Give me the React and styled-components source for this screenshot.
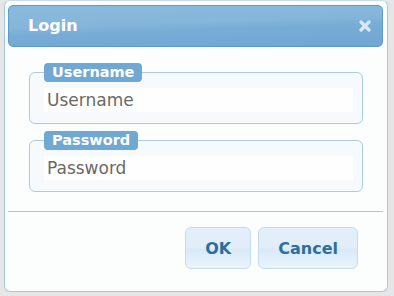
import React from "react";
import styled, { createGlobalStyle } from "styled-components";

const Global = createGlobalStyle`
  html, body { margin: 0; padding: 0; background: #e6e6e6; }
  body { font-family: "DejaVu Sans", Verdana, sans-serif; }
  * { box-sizing: border-box; }
`;

const Dialog = styled.div`
  margin-left: 4px;
  width: 384px;
  height: 292px;
  background: #fcfdfd;
  border: 1px solid #a6c9e2;
  border-top-color: #c9dced;
  border-radius: 6px;
  padding: 4px 4px 0 3px;
  display: flex;
  flex-direction: column;
`;

const TitleBar = styled.div`
  height: 42px;
  border: 1px solid #5a9bd6;
  border-radius: 5px;
  background: linear-gradient(
    178deg,
    #8bb9dc 0%,
    #87b6db 40%,
    #78acd5 58%,
    #6fa6d2 100%
  );
  display: flex;
  align-items: center;
  justify-content: space-between;
  padding: 0 11px 0 19px;
`;

const Title = styled.span`
  color: #ffffff;
  font-weight: bold;
  font-size: 16px;
  line-height: 20px;
`;

const Close = styled.svg`
  width: 12px;
  height: 12px;
  display: block;
`;

const Body = styled.div`
  padding: 16px 20px 0 21px;
  display: flex;
  flex-direction: column;
  gap: 7px;
`;

const Field = styled.fieldset`
  margin: 0;
  border: 1px solid #a9cbe3;
  border-radius: 6px;
  padding: 6px 9px 11px 14px;
  background: #f7fafc;
  min-width: 0;
`;

const Legend = styled.legend`
  background: #70a8d4;
  color: #ffffff;
  font-weight: bold;
  font-size: 14.5px;
  line-height: 19px;
  height: 19px;
  padding: 0 8px;
  border-radius: 4px;
  margin: 0;
`;

const Input = styled.input`
  display: block;
  width: 100%;
  height: 24px;
  border: none;
  outline: none;
  background: #fefefe;
  padding: 0 0 0 3px;
  font-family: "DejaVu Sans", Verdana, sans-serif;
  font-size: 17px;
  color: #333;
  &::placeholder { color: #6b6864; opacity: 1; }
`;

const Separator = styled.div`
  height: 1px;
  background: #a9c8df;
  margin-top: 19px;
`;

const ButtonRow = styled.div`
  display: flex;
  justify-content: flex-end;
  gap: 7px;
  padding: 15px 25px 0 0;
`;

const Button = styled.button`
  height: 42px;
  padding: 0 19px;
  border: 1px solid #c5dbec;
  border-radius: 6px;
  background: linear-gradient(
    180deg,
    #e3effa 0%,
    #e1eef9 50%,
    #d8e9f8 53%,
    #eaf4fc 100%
  );
  color: #2e6e9e;
  font-family: "DejaVu Sans", Verdana, sans-serif;
  font-weight: bold;
  font-size: 16px;
  cursor: pointer;
`;

export default function App() {
  return (
    <>
      <Global />
      <Dialog>
        <TitleBar>
          <Title>Login</Title>
          <Close viewBox="0 0 12 12">
            <path
              d="M2 2 L10 10 M10 2 L2 10"
              stroke="#dbe8f3"
              strokeWidth="3.2"
              strokeLinecap="round"
              fill="none"
            />
          </Close>
        </TitleBar>
        <Body>
          <Field>
            <Legend>Username</Legend>
            <Input placeholder="Username" />
          </Field>
          <Field>
            <Legend>Password</Legend>
            <Input type="password" placeholder="Password" />
          </Field>
        </Body>
        <Separator />
        <ButtonRow>
          <Button>OK</Button>
          <Button>Cancel</Button>
        </ButtonRow>
      </Dialog>
    </>
  );
}
